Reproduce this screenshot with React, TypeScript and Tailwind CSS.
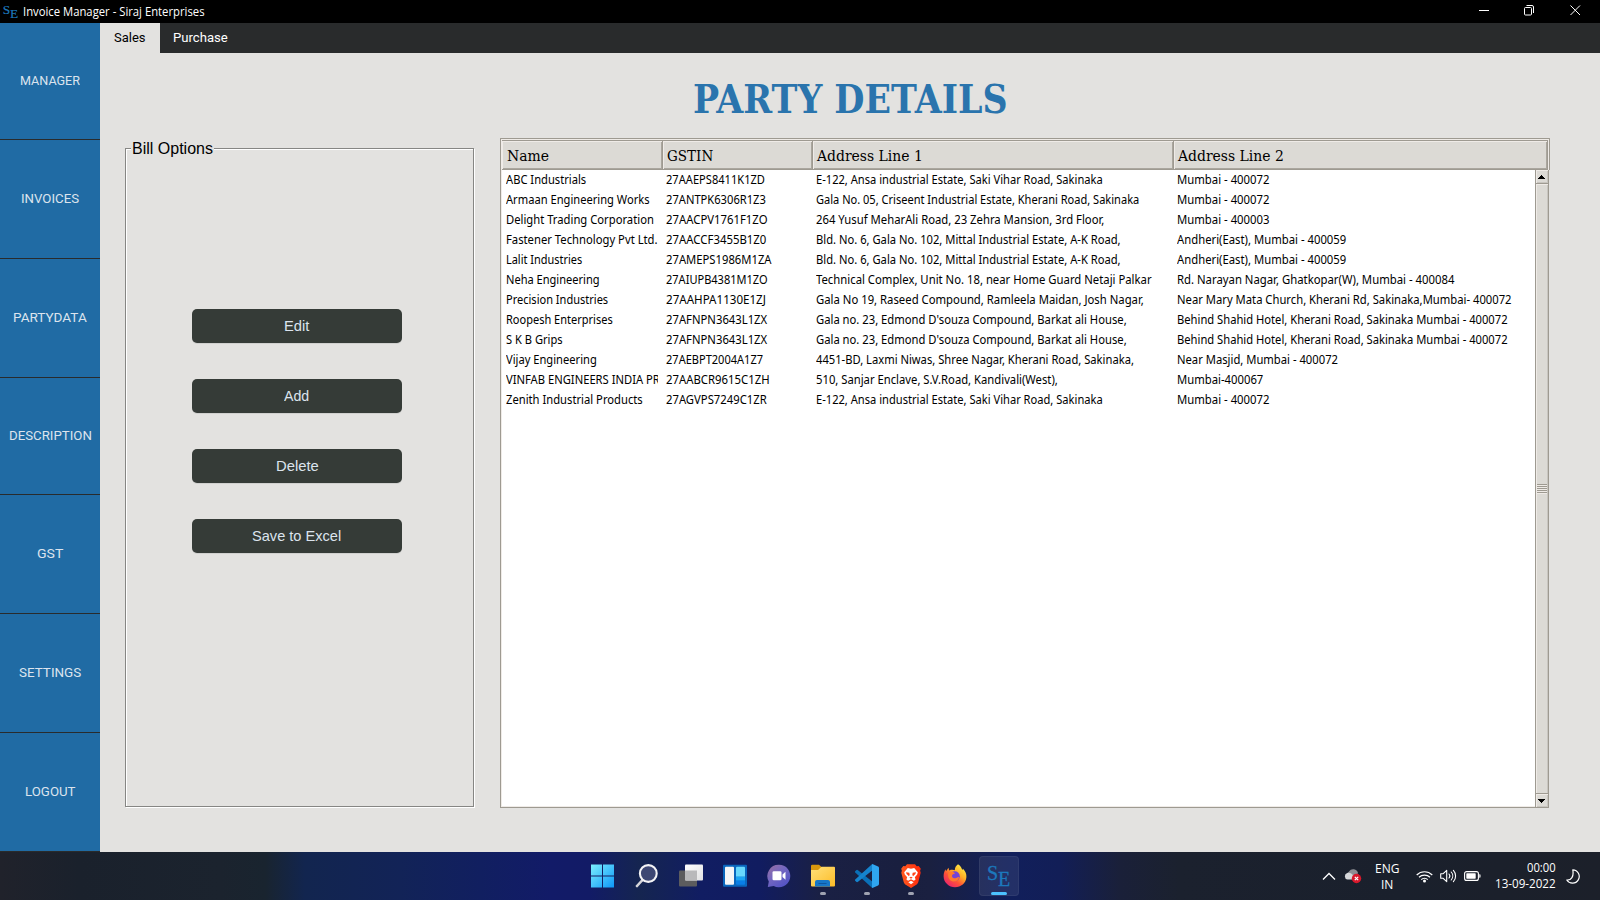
import { useLayoutEffect, useRef, useState, type ReactNode } from "react";

/* Text condensed or stretched horizontally to a given advance width. */
function Fit({ w, children }: { w: number; children: ReactNode }) {
  const ref = useRef<HTMLSpanElement>(null);
  const [k, setK] = useState(1);
  useLayoutEffect(() => {
    if (ref.current) setK(w / ref.current.offsetWidth);
  }, [w]);
  return (
    <span className="inline-block whitespace-nowrap" style={{ width: w }}>
      <span ref={ref} className="inline-block origin-left whitespace-nowrap" style={{ transform: `scaleX(${k})` }}>
        {children}
      </span>
    </span>
  );
}

const nav = [
  { label: "MANAGER", w: 60, h: "h-[117px]" },
  { label: "INVOICES", w: 58, h: "h-[119px]" },
  { label: "PARTYDATA", w: 74, h: "h-[119px]" },
  { label: "DESCRIPTION", w: 82.5, h: "h-[117px]" },
  { label: "GST", w: 26, h: "h-[119px]" },
  { label: "SETTINGS", w: 62, h: "h-[119px]" },
  { label: "LOGOUT", w: 51, h: "h-[119px]" },
];

type Cell = [string, number];
const rows: Cell[][] = [
  [["ABC Industrials", 80], ["27AAEPS8411K1ZD", 99], ["E-122, Ansa industrial Estate, Saki Vihar Road, Sakinaka", 286.5], ["Mumbai - 400072", 92.5]],
  [["Armaan Engineering Works", 144], ["27ANTPK6306R1Z3", 99.5], ["Gala No. 05, Criseent Industrial Estate, Kherani Road, Sakinaka", 323], ["Mumbai - 400072", 92.5]],
  [["Delight Trading Corporation", 148], ["27AACPV1761F1ZO", 102], ["264 Yusuf MeharAli Road, 23 Zehra Mansion, 3rd Floor,", 288], ["Mumbai - 400003", 92.5]],
  [["Fastener Technology Pvt Ltd.", 152], ["27AACCF3455B1Z0", 100.5], ["Bld. No. 6, Gala No. 102, Mittal Industrial Estate, A-K Road,", 305], ["Andheri(East), Mumbai - 400059", 169.5]],
  [["Lalit Industries", 76.5], ["27AMEPS1986M1ZA", 106], ["Bld. No. 6, Gala No. 102, Mittal Industrial Estate, A-K Road,", 305], ["Andheri(East), Mumbai - 400059", 169.5]],
  [["Neha Engineering", 94], ["27AIUPB4381M1ZO", 102], ["Technical Complex, Unit No. 18, near Home Guard Netaji Palkar", 335.5], ["Rd. Narayan Nagar, Ghatkopar(W), Mumbai - 400084", 277.5]],
  [["Precision Industries", 102], ["27AAHPA1130E1ZJ", 99.5], ["Gala No 19, Raseed Compound, Ramleela Maidan, Josh Nagar,", 328], ["Near Mary Mata Church, Kherani Rd, Sakinaka,Mumbai- 400072", 334.5]],
  [["Roopesh Enterprises", 106.5], ["27AFNPN3643L1ZX", 101.5], ["Gala no. 23, Edmond D'souza Compound, Barkat ali House,", 311], ["Behind Shahid Hotel, Kherani Road, Sakinaka Mumbai - 400072", 331]],
  [["S K B Grips", 56.5], ["27AFNPN3643L1ZX", 101.5], ["Gala no. 23, Edmond D'souza Compound, Barkat ali House,", 311], ["Behind Shahid Hotel, Kherani Road, Sakinaka Mumbai - 400072", 331]],
  [["Vijay Engineering", 91], ["27AEBPT2004A1Z7", 97.5], ["4451-BD, Laxmi Niwas, Shree Nagar, Kherani Road, Sakinaka,", 318], ["Near Masjid, Mumbai - 400072", 161]],
  [["VINFAB ENGINEERS INDIA PR", 154], ["27AABCR9615C1ZH", 104], ["510, Sanjar Enclave, S.V.Road, Kandivali(West),", 242], ["Mumbai-400067", 86.5]],
  [["Zenith Industrial Products", 136.5], ["27AGVPS7249C1ZR", 100.5], ["E-122, Ansa industrial Estate, Saki Vihar Road, Sakinaka", 286.5], ["Mumbai - 400072", 92.5]],
];

const columns = [
  { label: "Name", w: 42, cls: "w-[161px] pl-[5px]" },
  { label: "GSTIN", w: 46.5, cls: "w-[150px] pl-[4px]" },
  { label: "Address Line 1", w: 106, cls: "w-[361px] pl-[4px]" },
  { label: "Address Line 2", w: 106, cls: "flex-1 pl-[4px]" },
];
const cellWidths = ["w-[152px] mr-[8px]", "w-[144px] mr-[6px]", "w-[352px] mr-[9px]", "w-[350px]"];

function SeLogo({ big }: { big?: boolean }) {
  return (
    <svg
      className={big ? "h-[36px] w-[27px]" : "h-[24px] w-[18px]"}
      viewBox="0 -6 27 36"
      fill="#1c78bd"
      stroke="#1c78bd"
      strokeWidth=".3"
      fontFamily="'Liberation Serif', serif"
    >
      <text x="1" y="15" fontSize="20">S</text>
      <text x="12" y="21" fontSize="20">E</text>
    </svg>
  );
}

function WindowsIcon() {
  return (
    <svg width="24" height="24" viewBox="0 0 24 24">
      <defs>
        <linearGradient id="win" gradientUnits="userSpaceOnUse" x1="0" y1="0" x2="24" y2="24">
          <stop offset="0" stopColor="#7df0ff" />
          <stop offset="1" stopColor="#0a93f7" />
        </linearGradient>
      </defs>
      <path fill="url(#win)" d="M0 .5h11v11H0zM12 .5h11v11H12zM0 12.500h11v11H0zM12 12.500h11v11H12z" />
    </svg>
  );
}

function SearchIcon() {
  return (
    <svg width="24" height="24" viewBox="0 0 24 24" fill="none">
      <path d="M7 16.5 2 22" stroke="#d5d5da" strokeWidth="2.6" strokeLinecap="round" />
      <circle cx="13.3" cy="9.5" r="8.4" fill="#3d4773" stroke="#f3f3f5" strokeWidth="2.1" />
    </svg>
  );
}

function TaskViewIcon() {
  return (
    <svg width="26" height="24" viewBox="0 0 26 24">
      <defs>
        <linearGradient id="tv" x1="0" y1="0" x2="1" y2="1">
          <stop offset="0" stopColor="#fff" />
          <stop offset="1" stopColor="#e1e1e3" />
        </linearGradient>
      </defs>
      <rect x="1" y="6.500" width="18" height="16" rx="1" fill="#5c5c5e" />
      <rect x="7" y=".5" width="18" height="16" rx="1" fill="url(#tv)" />
      <path d="M7 6.500h12v10H8a1 1 0 0 1-1-1z" fill="#b9b9bb" />
    </svg>
  );
}

function WidgetsIcon() {
  return (
    <svg width="24" height="24" viewBox="0 0 24 24">
      <rect x="0" y=".7" width="24" height="22" rx="1" fill="#0a66bd" />
      <rect x="2" y="2.700" width="9" height="18" rx="1" fill="#f5f5f7" />
      <path d="M13 3.700a1 1 0 0 1 1-1h7a1 1 0 0 1 1 1v9h-9z" fill="#68d8fd" />
      <path d="M13 12.700h9v4h-9z" fill="#1ba5f5" />
      <path d="M13 16.700h9v3a1 1 0 0 1-1 1h-7a1 1 0 0 1-1-1z" fill="#0a7ee6" />
    </svg>
  );
}

function ChatIcon() {
  return (
    <svg width="24" height="24" viewBox="0 0 24 24">
      <defs>
        <linearGradient id="chat" x1="0" y1="0" x2=".8" y2="1">
          <stop offset="0" stopColor="#9a6f9f" />
          <stop offset=".45" stopColor="#7467c0" />
          <stop offset="1" stopColor="#4f51c6" />
        </linearGradient>
      </defs>
      <path d="M12 .7a11.300 11.300 0 1 1-5.300 21.300L.8 23l1-5.500A11.300 11.300 0 0 1 12 .7z" fill="url(#chat)" />
      <rect x="5.500" y="7.200" width="9" height="9" rx="1.300" fill="#fff" />
      <path d="m15.500 10.500 3-2.800v8l-3-2.800z" fill="#fff" />
    </svg>
  );
}

function ExplorerIcon() {
  return (
    <svg width="24" height="24" viewBox="0 0 24 24">
      <defs>
        <linearGradient id="fold" x1="0" y1="0" x2="1" y2="1">
          <stop offset="0" stopColor="#ffe07a" />
          <stop offset="1" stopColor="#fdbc27" />
        </linearGradient>
      </defs>
      <path d="M0 2a1.300 1.300 0 0 1 1.300-1.300H8l2.500 2.300V7H0z" fill="#d9980d" />
      <path d="M0 6h7l3.500-3.200H23a1 1 0 0 1 1 1V21.500a1 1 0 0 1-1 1H1a1 1 0 0 1-1-1z" fill="url(#fold)" />
      <path d="M4 22.500V18a2 2 0 0 1 2-2h11a2 2 0 0 1 2 2v4.500z" fill="#1777c8" />
      <path d="M7.500 19h8v1h-8z" fill="#0f57a0" />
    </svg>
  );
}

function CodeIcon() {
  return (
    <svg width="24" height="24" viewBox="0 0 24 24">
      <path d="M1.200 6.200.2 7.200a.9.9 0 0 0 0 1.300L17.200 24V17.500L3 6.200a1.300 1.300 0 0 0-1.800 0z" fill="#0a70b8" />
      <path d="m1.200 17.800-1-1a.9.9 0 0 1 0-1.300L17.200 0v6.500L3 17.800a1.300 1.300 0 0 1-1.800 0z" fill="#1583cd" />
      <path d="M17.400 23.900c-.5-.3-.4-.7-.4-1.500V1.600c0-.8-.1-1.200.4-1.500l5.700 2.500c.6.300.9.700.9 1.400v16c0 .7-.3 1.100-.9 1.400z" fill="#2fa6f0" />
    </svg>
  );
}

function BraveIcon() {
  return (
    <svg width="20" height="24" viewBox="0 0 20 24">
      <defs>
        <linearGradient id="brave" x1="0" y1="0" x2="1" y2="0">
          <stop offset="0" stopColor="#ff5a1f" />
          <stop offset="1" stopColor="#ff2a0c" />
        </linearGradient>
      </defs>
      <path d="M6 .3h8L15.700 2.300l2-.3L19.800 4.700l-.7 2 .6 2-2.400 9.300c-.3 1.200-1 2-2 2.700L10 24l-5.300-3.300c-1-.7-1.700-1.500-2-2.700L.3 8.700l.6-2-.7-2L2.300 2l2 .3z" fill="url(#brave)" />
      <path d="m10 4.800 3.200-.7 3.600 4.200-.6 2.200-2.400 2.800.8 2.100-1.700 1.400-2.900-1.500-2.900 1.500-1.700-1.400.8-2.100-2.400-2.800-.6-2.200 3.600-4.200z" fill="#fff" />
      <path d="m5 8.200 3.300.5.4 2-.7 1.600L5.600 9.900zM15 8.200l-3.300.5-.4 2 .7 1.600 2.400-2.400zM8.300 13.500l1.700-.8 1.700.8-1.700 1.200z" fill="#ff431a" />
      <path d="M7.300 18.200 10 16.700l2.700 1.500L10 20.300z" fill="#fff" />
    </svg>
  );
}

function FirefoxIcon() {
  return (
    <svg width="24" height="24" viewBox="0 0 24 24">
      <defs>
        <linearGradient id="ff" x1=".85" y1=".1" x2=".2" y2=".95">
          <stop offset="0" stopColor="#ffe945" />
          <stop offset=".35" stopColor="#ffae25" />
          <stop offset=".65" stopColor="#ff5237" />
          <stop offset="1" stopColor="#e8246e" />
        </linearGradient>
      </defs>
      <path d="M15 .3c2.700 1.700 3.700 4 4.200 5.600l.8-1.200c2.500 2.400 3.600 5.300 3.400 8.300C23 19 18 23.300 12 23.300S.6 18.600.6 12.300c0-3 1-5.500 1.900-7l.5 2 2.500-3.500.7 2.600C9 5.400 11 6 11.800 6.300 11.700 3.800 13 1.600 15 .3z" fill="url(#ff)" />
      <circle cx="11.800" cy="12.300" r="5" fill="#7243d9" />
      <path d="M5.500 8.500c2.800-1.500 5.500-.7 6.500.9-.8.300-2.300.5-2.800 1.600-.8 1.700.7 3.600 3 3.200 1.700-.3 2.500-1.400 4-1.200-.7 3.600-4 5.300-7 4.300C5.800 16.200 4.300 12 5.500 8.500z" fill="#ff7a2e" />
    </svg>
  );
}

const apps: { icon: ReactNode; running?: boolean }[] = [
  { icon: <WindowsIcon /> },
  { icon: <SearchIcon /> },
  { icon: <TaskViewIcon /> },
  { icon: <WidgetsIcon /> },
  { icon: <ChatIcon /> },
  { icon: <ExplorerIcon />, running: true },
  { icon: <CodeIcon />, running: true },
  { icon: <BraveIcon />, running: true },
  { icon: <FirefoxIcon /> },
];

function TitleBar() {
  return (
    <header className="flex h-[23px] shrink-0 items-center bg-black pr-[19px] pl-[2px] text-white">
      <SeLogo />
      <span className="ml-[3px] flex-1 font-['Open_Sans',sans-serif] text-[12px] leading-none">
        <Fit w={181.5}>Invoice Manager - Siraj Enterprises</Fit>
      </span>
      <svg className="-mt-[3px]" width="102" height="12" viewBox="0 0 102 12" fill="none" stroke="#fff">
        <path d="M0 6.500h10" />
        <rect x="45.500" y="3.500" width="7" height="7.500" rx="1" />
        <path d="M47.500 1.500h5.500a1.500 1.500 0 0 1 1.500 1.500v6" />
        <path d="m91.500 1.500 9.500 9.500m0-9.500-9.500 9.500" />
      </svg>
    </header>
  );
}

function Sidebar() {
  return (
    <nav className="flex w-[100px] shrink-0 flex-col bg-[#206ba4]">
      {nav.map((n) => (
        <div key={n.label} className={`flex ${n.h} items-center justify-center border-b border-[#292b2c] pb-[2px] text-[13px] leading-none text-[#dce4ee]`}>
          <Fit w={n.w}>{n.label}</Fit>
        </div>
      ))}
    </nav>
  );
}

const actions: Cell[] = [["Edit", 25.5], ["Add", 25.5], ["Delete", 42.5], ["Save to Excel", 89.5]];

function BillOptions() {
  return (
    <section className="relative mt-[10px] flex h-[659px] w-[349px] flex-col items-center gap-[36px] border border-[#868684] pt-[160px] shadow-[inset_1px_1px_0_#fff,1px_1px_0_#fff]">
      <h2 className="absolute -top-[9px] left-[5px] bg-[#e3e2e0] pr-[1px] pl-[1px] font-['Liberation_Sans',sans-serif] text-[16px] leading-[18px] text-black">
        <Fit w={81}>Bill Options</Fit>
      </h2>
      {actions.map(([b, w]) => (
        <button
          key={b}
          className="mr-[5px] h-[34px] w-[210px] shrink-0 rounded-[5px] bg-[#353b37] font-['Liberation_Sans',sans-serif] text-[15px] leading-[34px] text-[#dce4ee] shadow-[0_1px_0_#d0d0ce]"
        >
          <Fit w={w}>{b}</Fit>
        </button>
      ))}
    </section>
  );
}

function ArrowButton({ up }: { up?: boolean }) {
  return (
    <div className="flex h-[13px] items-center justify-center border-t border-l border-[#efebe7] bg-[#dcdad5] pr-[2px] shadow-[inset_-1px_-1px_0_#c8c5bf]">
      <svg width="7" height="4" viewBox="0 0 7 4" shapeRendering="crispEdges">
        <path d={up ? "M3 0h1v1h1v1h1v1h1v1H0V3h1V2h1V1h1z" : "M0 0h7v1H6v1H5v1H4v1H3V3H2V2H1V1H0z"} />
      </svg>
    </div>
  );
}

function Scrollbar() {
  return (
    <div className="flex w-[14px] shrink-0 flex-col border-x border-[#9e9a91]">
      <ArrowButton up />
      <div className="flex flex-1 flex-col items-center justify-center border-y border-[#9e9a91] bg-[#dcdad5] shadow-[inset_1px_1px_0_#efebe7,inset_-1px_0_0_#c8c5bf]">
        <div className="flex w-[10px] flex-col">
          {[0, 1, 2, 3, 4].map((i) => (
            <div key={i} className="h-[2px] border-b border-[#efebe7] bg-[#9e9a91]" />
          ))}
        </div>
      </div>
      <ArrowButton />
    </div>
  );
}

function PartyTable() {
  return (
    <section className="flex h-[670px] w-[1050px] flex-col">
      <div className="flex h-[32px] shrink-0 rounded-t-[1px] border-x border-t border-[#9e9a91] bg-[#efebe7] px-px pt-px">
        <div className="flex w-full border-t border-[#9e9a91]">
          {columns.map((c) => (
            <div
              key={c.label}
              className={`${c.cls} flex items-center border-r border-b border-[#9e9a91] bg-[#dcdad5] pt-[3px] font-['DejaVu_Serif_Condensed','DejaVu_Serif',serif] text-[15.500px] leading-none text-black shadow-[inset_1px_1px_0_#efebe7,inset_-1px_-1px_0_#aaa69e]`}
            >
              <Fit w={c.w}>{c.label}</Fit>
            </div>
          ))}
        </div>
      </div>
      <div className="mr-px flex flex-1 border-b border-l border-[#9e9a91] bg-white">
        <div className="flex-1 border-b border-l border-[#efebe7] pl-[4px] font-['Noto_Sans','Open_Sans',sans-serif] text-[12px] leading-[20px] text-black">
          {rows.map((r, i) => (
            <div key={i} className="flex h-[20px]">
              {r.map(([t, w], j) => (
                <div key={j} className={`${cellWidths[j]} shrink-0 overflow-hidden`}>
                  <Fit w={w}>{t}</Fit>
                </div>
              ))}
            </div>
          ))}
        </div>
        <Scrollbar />
      </div>
    </section>
  );
}

function Tray() {
  return (
    <div className="flex items-center pr-[20px] font-['Open_Sans',sans-serif] text-[12px] leading-[16px] text-white">
      <svg width="14" height="9" viewBox="0 0 14 9" fill="none" stroke="#fff" strokeWidth="1.300">
        <path d="m1 7.500 6-6 6 6" />
      </svg>
      <svg className="ml-[8px]" width="18" height="16" viewBox="0 0 18 16">
        <path d="M5 3.500a5 5 0 0 1 9 1.500l-3 5-8-4z" fill="#8d8f94" />
        <path d="M3.500 11.500a3.300 3.300 0 0 1-.3-6.400c2-.8 4 .2 5 1.400L13 9v2.500z" fill="#d6d7da" />
        <circle cx="12.500" cy="10.500" r="4.700" fill="#d8192c" />
        <path d="m10.800 8.800 3.400 3.400m0-3.400-3.400 3.400" stroke="#fff" strokeWidth="1.200" />
      </svg>
      <div className="ml-[13px] flex w-[24px] flex-col items-center pt-[2px]">
        <Fit w={24}>ENG</Fit>
        <Fit w={12}>IN</Fit>
      </div>
      <svg className="ml-[17px]" width="17" height="13" viewBox="0 0 17 13" fill="none" stroke="#fff" strokeWidth="1.200">
        <path d="M.7 5a11 11 0 0 1 15.600 0M3 7.300a7.800 7.800 0 0 1 11 0M5.300 9.600a4.500 4.500 0 0 1 6.400 0" />
        <circle cx="8.500" cy="11" r="1.500" fill="#fff" stroke="none" />
      </svg>
      <svg className="ml-[7px]" width="17" height="14" viewBox="0 0 17 14" fill="none" stroke="#fff" strokeWidth="1.100" strokeLinejoin="round" strokeLinecap="round">
        <path d="M.7 4.700h2.500L6.700 1.300v11.400L3.200 9.300H.7zM9 5a3 3 0 0 1 0 4M11.200 3a6 6 0 0 1 0 8M13.400 1.300a8.500 8.500 0 0 1 0 11.400" />
      </svg>
      <svg className="ml-[7px]" width="17" height="12" viewBox="0 0 17 12">
        <rect x=".6" y="1.600" width="13.800" height="8.800" rx="2" fill="none" stroke="#fff" strokeWidth="1.100" />
        <rect x="2.300" y="3.300" width="9.400" height="5.400" rx=".6" fill="#fff" />
        <path d="M15.300 4.300h.5a.7.700 0 0 1 .7.700v2a.7.700 0 0 1-.7.700h-.5z" fill="#fff" />
      </svg>
      <div className="ml-[14px] flex w-[61px] flex-col items-end">
        <Fit w={29}>00:00</Fit>
        <Fit w={61}>13-09-2022</Fit>
      </div>
      <svg className="ml-[10px]" width="14" height="15" viewBox="0 0 14 15" fill="none" stroke="#fff" strokeWidth="1.200" strokeLinejoin="round">
        <path d="M6.800.8a6.700 6.700 0 1 1-6 10.200c4.500.3 7.200-3.400 6-10.200z" />
      </svg>
    </div>
  );
}

function Taskbar() {
  return (
    <footer className="grid h-[48px] shrink-0 grid-cols-[1fr_440px_1fr] bg-[linear-gradient(90deg,#20222b_0px,#1a212c_80px,#1b232e_220px,#19242f_265px,#12254f_305px,#122357_400px,#111f60_480px,#121b68_550px,#121b66_590px,#152550_640px,#111d62_700px,#111c60_760px,#1a2044_820px,#191f3f_900px,#1a2040_930px,#111f5b_1010px,#121e57_1060px,#1a2039_1120px,#1b212e_1180px,#1a202c_1400px,#1c202a_1600px)]">
      <div />
      <div className="ml-px flex">
        {apps.map((a, i) => (
          <div key={i} className="relative flex w-[44px] shrink-0 justify-center pt-[12px]">
            {a.icon}
            {a.running && <span className="absolute top-[40px] left-[19px] h-[3px] w-[6px] rounded-full bg-[#a0a3b1]" />}
          </div>
        ))}
        <div className="relative mt-[4px] ml-[2px] flex h-[40px] w-[40px] shrink-0 justify-center rounded-[4px] border border-white/5 bg-white/8 pt-[2px]">
          <SeLogo big />
          <span className="absolute top-[35px] left-[11px] h-[3px] w-[16px] rounded-full bg-[#4cc2ff]" />
        </div>
      </div>
      <div className="flex justify-end">
        <Tray />
      </div>
    </footer>
  );
}

export default function App() {
  return (
    <div className="flex h-[900px] w-[1600px] flex-col overflow-hidden bg-[#e3e2e0] font-[Roboto,sans-serif]">
      <TitleBar />
      <div className="flex h-[829px] shrink-0">
        <Sidebar />
        <main className="flex flex-1 flex-col">
          <div className="flex h-[30px] shrink-0 bg-[#292b2c] text-[13px] leading-[29px]">
            <div className="w-[60px] bg-[#e3e2e0] pl-[14px] text-black">
              <Fit w={32}>Sales</Fit>
            </div>
            <div className="pl-[13px] text-white">
              <Fit w={54.5}>Purchase</Fit>
            </div>
          </div>
          <h1 className="flex h-[85px] shrink-0 justify-center pt-[24px] font-['DejaVu_Serif_Condensed','DejaVu_Serif',serif] text-[40px] leading-[44px] font-bold text-[#2a74ad]">
            <Fit w={315}>PARTY DETAILS</Fit>
          </h1>
          <div className="flex pl-[25px]">
            <BillOptions />
            <div className="w-[26px]" />
            <PartyTable />
          </div>
        </main>
      </div>
      <Taskbar />
    </div>
  );
}
